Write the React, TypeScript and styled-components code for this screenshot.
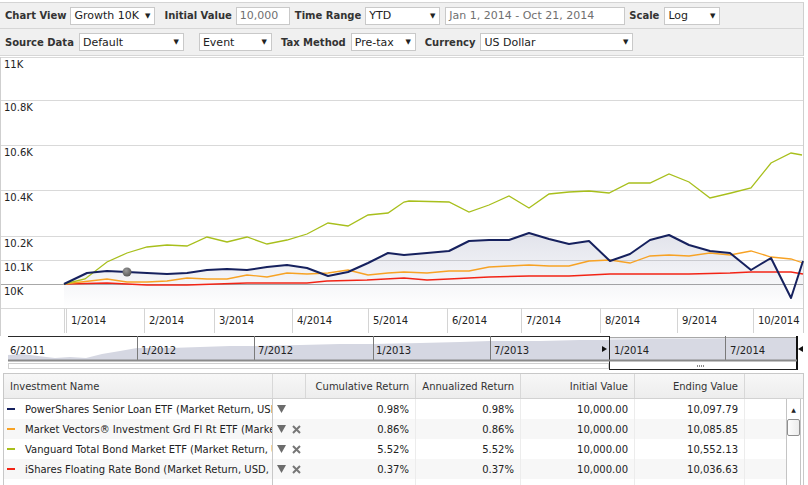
import React from 'react';
import styled, { createGlobalStyle } from 'styled-components';

const GlobalStyle = createGlobalStyle`
  html, body {
    margin: 0;
    padding: 0;
    background: #fff;
  }
  body {
    font-family: "DejaVu Sans", Verdana, sans-serif;
    font-size: 10px;
    color: #222;
  }
`;

const Page = styled.div`
  width: 808px;
  height: 485px;
  overflow: hidden;
  padding-top: 2px;
  box-sizing: border-box;
`;

/* ---------- toolbar ---------- */

const Toolbar = styled.div`
  width: 804px;
  border-top: 1px solid #d4d4d4;
  border-right: 1px solid #cfcfcf;
  box-sizing: border-box;
`;

const ToolbarRow = styled.div<{ $h: number; $gap: number }>`
  display: flex;
  align-items: center;
  gap: ${({ $gap }) => $gap}px;
  height: ${({ $h }) => $h}px;
  padding-left: 5px;
  background: #f0f0f0;
  border-bottom: 1px solid #d6d6d6;
`;

const Label = styled.span<{ $space?: number }>`
  font-weight: bold;
  font-size: 10px;
  color: #333;
  margin-left: ${({ $space }) => $space ?? 0}px;
  white-space: nowrap;
`;

const Field = styled.div<{ $w: number; $muted?: boolean; $space?: number }>`
  box-sizing: border-box;
  width: ${({ $w }) => $w}px;
  height: 18px;
  margin-left: ${({ $space }) => $space ?? 0}px;
  display: flex;
  align-items: center;
  padding: 0 4px 0 3px;
  background: #fff;
  border: 1px solid #c9c9c9;
  font-size: 11px;
  color: ${({ $muted }) => ($muted ? '#6f6f6f' : '#222')};
  white-space: nowrap;
  overflow: hidden;
`;

const Caret = styled.span`
  margin-left: auto;
  font-size: 7px;
  color: #222;
`;

const Select: React.FC<{ w: number; value: string; space?: number }> = ({ w, value, space }) => (
  <Field $w={w} $space={space}>
    {value}
    <Caret>▼</Caret>
  </Field>
);

/* ---------- chart ---------- */

const ChartPanel = styled.div`
  width: 808px;
  height: 277px;
`;

const NavigatorPanel = styled.div`
  width: 808px;
  height: 40px;
`;

const AxisText = styled.text`
  font-family: "DejaVu Sans", Verdana, sans-serif;
  font-size: 10px;
  fill: #222;
`;

const navy = [[64,284],[87,273],[107,271],[127,272],[147,273],[167,274],[187,273],[207,270],[227,269],[247,270],[267,267],[287,265],[307,268],[328,276],[348,272],[368,263],[388,253],[404,255],[427,253],[449,251],[469,241],[489,240],[509,240],[529,233],[549,239],[569,244],[589,241],[610,261],[630,254],[650,240],[669,235],[689,245],[710,251],[730,253],[751,270],[771,258],[791,298],[803,261]];
const green = [[64,284],[85,279],[107,262],[127,253],[147,247],[167,245],[187,246],[207,237],[227,242],[247,237],[267,244],[287,240],[307,234],[328,223],[348,226],[368,215],[388,213],[404,202],[409,201],[449,202],[469,212],[489,205],[509,196],[529,208],[549,194],[569,192],[589,191],[609,193],[629,183],[650,183],[669,174],[689,182],[710,198],[731,193],[751,188],[771,163],[791,153],[802,155]];
const orange = [[64,284],[107,279],[127,282],[147,282],[167,281],[187,278],[207,279],[227,279],[247,275],[267,277],[287,273],[307,274],[328,273],[348,270],[368,275],[388,273],[404,272],[427,273],[449,271],[469,271],[489,267],[509,266],[529,265],[549,266],[569,266],[589,261],[610,260],[630,263],[650,256],[669,255],[689,256],[710,253],[730,255],[751,251],[771,257],[791,259],[803,263]];
const red = [[64,284],[107,283],[147,285],[187,285],[247,283],[307,283],[327,281],[367,280],[404,278],[427,280],[449,279],[489,277],[529,276],[569,276],[610,274],[650,274],[689,274],[730,273],[751,272],[791,272],[803,274]];

const pts = (a: number[][]) => a.map((p) => p.join(',')).join(' ');

const gridLines = [
  { y: 57, label: '11K' },
  { y: 100, label: '10.8K' },
  { y: 145, label: '10.6K' },
  { y: 190, label: '10.4K' },
  { y: 236, label: '10.2K' },
  { y: 260, label: '10.1K' },
  { y: 284, label: '10K' },
];

const months = [
  { x: 66, label: '1/2014' },
  { x: 144, label: '2/2014' },
  { x: 214, label: '3/2014' },
  { x: 292, label: '4/2014' },
  { x: 368, label: '5/2014' },
  { x: 447, label: '6/2014' },
  { x: 521, label: '7/2014' },
  { x: 600, label: '8/2014' },
  { x: 677, label: '9/2014' },
  { x: 753, label: '10/2014' },
];

const GrowthChart: React.FC = () => (
  <ChartPanel>
    <svg width="808" height="277" viewBox="0 56 808 277">
      <defs>
        <linearGradient id="navyFill" x1="0" y1="0" x2="0" y2="1">
          <stop offset="0" stopColor="#1b2766" stopOpacity="0.13" />
          <stop offset="1" stopColor="#1b2766" stopOpacity="0" />
        </linearGradient>
        <radialGradient id="marker" cx="0.4" cy="0.35" r="0.7">
          <stop offset="0" stopColor="#9a9a9a" />
          <stop offset="1" stopColor="#555" />
        </radialGradient>
      </defs>
      {gridLines.map((g) => (
        <g key={g.label}>
          <line x1="0" x2="803" y1={g.y + 0.5} y2={g.y + 0.5} stroke={g.label === '10K' ? '#a8a8a8' : '#d9d9d9'} />
          <AxisText x="4" y={g.y + 11}>{g.label}</AxisText>
        </g>
      ))}
      <line x1="0" x2="803" y1="308.5" y2="308.5" stroke="#d9d9d9" />
      <line x1="0.5" x2="0.5" y1="57" y2="333" stroke="#cfcfcf" />
      <line x1="803.5" x2="803.5" y1="57" y2="333" stroke="#cfcfcf" />
      <line x1="64.5" x2="64.5" y1="308" y2="333" stroke="#d4d4d4" />
      {months.map((m) => (
        <g key={m.label}>
          <line x1={m.x + 0.5} x2={m.x + 0.5} y1="308" y2="333" stroke="#d4d4d4" />
          <AxisText x={m.x + 5} y="324">{m.label}</AxisText>
        </g>
      ))}
      <polygon points={`64,308 ${pts(navy)} 803,308`} fill="url(#navyFill)" />
      <polyline points={pts(red)} fill="none" stroke="#f22416" strokeWidth="1.4" />
      <polyline points={pts(orange)} fill="none" stroke="#f7a224" strokeWidth="1.3" />
      <polyline points={pts(green)} fill="none" stroke="#a8bf1c" strokeWidth="1.3" />
      <polyline points={pts(navy)} fill="none" stroke="#16215e" strokeWidth="2" strokeLinejoin="round" />
      <circle cx="127" cy="272" r="4.5" fill="url(#marker)" />
    </svg>
  </ChartPanel>
);

const navLabels = [
  { x: 10, label: '6/2011' },
  { x: 141, label: '1/2012' },
  { x: 258, label: '7/2012' },
  { x: 376, label: '1/2013' },
  { x: 494, label: '7/2013' },
  { x: 614, label: '1/2014' },
  { x: 730, label: '7/2014' },
];

const Navigator: React.FC = () => (
  <NavigatorPanel>
    <svg width="808" height="40" viewBox="0 333 808 40">
      <line x1="0.5" x2="0.5" y1="333" y2="336" stroke="#cfcfcf" />
      <path
        d="M8,360 L8,355 L22,354 L38,356 L55,358 L70,357 L86,358 L102,354 L120,351 L137,348 L170,348 L200,347 L230,346 L254,346 L300,345 L340,344 L373,344 L420,343 L460,342 L490,341 L540,341 L580,340 L609,340 L650,339 L700,339 L750,338 L797,338 L797,360 Z"
        fill="#d5d7e2"
      />
      <rect x="609" y="337" width="188" height="23" fill="#d9dae4" opacity="0.55" />
      <line x1="8" x2="609" y1="336.5" y2="336.5" stroke="#2a2a2a" />
      <line x1="609" x2="797" y1="337.5" y2="337.5" stroke="#a8a8a8" />
      {[137, 254, 373, 490, 725].map((x) => (
        <line key={x} x1={x + 0.5} x2={x + 0.5} y1="336" y2="360" stroke="#7a7a7a" />
      ))}
      <line x1="609.5" x2="609.5" y1="336" y2="370" stroke="#222" />
      <line x1="797" x2="797" y1="336" y2="370" stroke="#111" strokeWidth="2" />
      <line x1="8" x2="797" y1="360.5" y2="360.5" stroke="#8a8a8a" strokeWidth="2" />
      {navLabels.map((n) => (
        <AxisText key={n.label} x={n.x} y="354">{n.label}</AxisText>
      ))}
      <rect x="8.5" y="363.5" width="600" height="5" fill="#fff" stroke="#d0d0d0" />
      <line x1="609" x2="797" y1="369.5" y2="369.5" stroke="#222" />
      {[697, 699, 701, 703].map((x) => (
        <rect key={x} x={x} y="365" width="1" height="2" fill="#888" />
      ))}
      <polygon points="602,346 607,349 602,352" fill="#111" />
      <polygon points="803,346 798,349 803,352" fill="#111" />
    </svg>
  </NavigatorPanel>
);

/* ---------- table ---------- */

const Table = styled.div`
  box-sizing: border-box;
  width: 801px;
  margin-left: 3px;
  border: 1px solid #c8c8c8;
  border-bottom: none;
  height: 112px;
  overflow: hidden;
`;

const cols = '269px 33px 110px 105px 114px 110px 1fr';

const HeaderRow = styled.div`
  display: grid;
  grid-template-columns: ${cols};
  height: 24px;
  background: linear-gradient(#f7f7f7, #ededed);
  border-bottom: 1px solid #d2d2d2;
`;

const HeadCell = styled.div<{ $align?: 'left' | 'right' }>`
  display: flex;
  align-items: center;
  justify-content: ${({ $align }) => ($align === 'right' ? 'flex-end' : 'flex-start')};
  padding: 0 6px;
  color: #333;
  border-right: 1px solid #d8d8d8;
  white-space: nowrap;
  &:last-child {
    border-right: none;
  }
`;

const Body = styled.div`
  display: flex;
`;

const Rows = styled.div`
  width: 782px;
`;

const Row = styled.div<{ $alt?: boolean; $h?: number }>`
  display: grid;
  grid-template-columns: ${cols};
  height: ${({ $h }) => $h ?? 20}px;
  background: ${({ $alt }) => ($alt ? '#f7f7f7' : '#fff')};
`;

const Cell = styled.div<{ $sep?: 'strong' | 'faint' | 'none' }>`
  display: flex;
  align-items: center;
  justify-content: flex-end;
  padding: 0 6px;
  color: #222;
  white-space: nowrap;
  border-right: 1px solid
    ${({ $sep }) => ($sep === 'strong' ? '#c8c8c8' : $sep === 'faint' ? '#ececec' : 'transparent')};
`;

const NameCell = styled.div`
  display: flex;
  align-items: center;
  gap: 10px;
  padding-left: 3px;
  overflow: hidden;
  white-space: nowrap;
  color: #222;
  border-right: 1px solid #c8c8c8;
`;

const Swatch = styled.span<{ $color: string }>`
  flex: none;
  width: 8px;
  height: 2px;
  background: ${({ $color }) => $color};
`;

const IconCell = styled.div`
  display: flex;
  align-items: center;
  gap: 6px;
  padding-left: 4px;
`;

const ScrollTrack = styled.div`
  box-sizing: border-box;
  width: 15px;
  height: 90px;
  border-left: 1px solid #c4c4c4;
  border-right: 1px solid #c4c4c4;
  display: flex;
  flex-direction: column;
  align-items: center;
`;

const ScrollArrow = styled.div`
  height: 20px;
  display: flex;
  align-items: center;
  font-size: 6px;
  color: #222;
`;

const ScrollThumb = styled.div`
  box-sizing: border-box;
  width: 13px;
  height: 17px;
  border: 1px solid #8f8f8f;
  border-radius: 2px;
  background: linear-gradient(90deg, #fdfdfd, #ececec);
`;

const DownIcon = () => (
  <svg width="9" height="8" viewBox="0 0 9 8">
    <polygon points="0,0 9,0 4.5,8" fill="#6c6c6c" />
  </svg>
);

const CloseIcon = () => (
  <svg width="9" height="9" viewBox="0 0 9 9">
    <path d="M1,1 L8,8 M8,1 L1,8" stroke="#777" strokeWidth="2" />
  </svg>
);

interface Investment {
  name: string;
  color: string;
  removable: boolean;
  cumulative: string;
  annualized: string;
  initial: string;
  ending: string;
}

const investments: Investment[] = [
  { name: 'PowerShares Senior Loan ETF (Market Return, USD, Daily)', color: '#16215e', removable: false, cumulative: '0.98%', annualized: '0.98%', initial: '10,000.00', ending: '10,097.79' },
  { name: 'Market Vectors® Investment Grd Fl Rt ETF (Market Return, USD, Daily)', color: '#f7a224', removable: true, cumulative: '0.86%', annualized: '0.86%', initial: '10,000.00', ending: '10,085.85' },
  { name: 'Vanguard Total Bond Market ETF (Market Return, USD, Daily)', color: '#a8bf1c', removable: true, cumulative: '5.52%', annualized: '5.52%', initial: '10,000.00', ending: '10,552.13' },
  { name: 'iShares Floating Rate Bond (Market Return, USD, Daily)', color: '#f22416', removable: true, cumulative: '0.37%', annualized: '0.37%', initial: '10,000.00', ending: '10,036.63' },
];

const InvestmentTable: React.FC = () => (
  <Table>
    <HeaderRow>
      <HeadCell>Investment Name</HeadCell>
      <HeadCell />
      <HeadCell $align="right">Cumulative Return</HeadCell>
      <HeadCell $align="right">Annualized Return</HeadCell>
      <HeadCell $align="right">Initial Value</HeadCell>
      <HeadCell $align="right">Ending Value</HeadCell>
      <HeadCell />
    </HeaderRow>
    <Body>
      <Rows>
        {investments.map((inv, i) => (
          <Row key={inv.name} $alt={i % 2 === 1}>
            <NameCell title={inv.name}>
              <Swatch $color={inv.color} />
              {inv.name}
            </NameCell>
            <IconCell>
              <DownIcon />
              {inv.removable && <CloseIcon />}
            </IconCell>
            <Cell $sep="faint">{inv.cumulative}</Cell>
            <Cell $sep="faint">{inv.annualized}</Cell>
            <Cell $sep="faint">{inv.initial}</Cell>
            <Cell $sep="faint">{inv.ending}</Cell>
            <Cell $sep="none" />
          </Row>
        ))}
        <Row $h={12}>
          <NameCell />
          <IconCell />
          <Cell $sep="faint" />
          <Cell $sep="faint" />
          <Cell $sep="faint" />
          <Cell $sep="faint" />
          <Cell $sep="none" />
        </Row>
      </Rows>
      <ScrollTrack>
        <ScrollArrow>▲</ScrollArrow>
        <ScrollThumb />
      </ScrollTrack>
    </Body>
  </Table>
);

export default function App() {
  return (
    <Page>
      <GlobalStyle />
      <Toolbar>
        <ToolbarRow $h={25} $gap={4}>
          <Label>Chart View</Label>
          <Select w={85} value="Growth 10K" />
          <Label $space={5}>Initial Value</Label>
          <Field $w={54} $muted>10,000</Field>
          <Label $space={1}>Time Range</Label>
          <Select w={75} value="YTD" />
          <Field $w={180} $space={1} $muted>Jan 1, 2014 - Oct 21, 2014</Field>
          <Label>Scale</Label>
          <Select w={56} value="Log" space={1} />
        </ToolbarRow>
        <ToolbarRow $h={26} $gap={5}>
          <Label>Source Data</Label>
          <Select w={105} value="Default" />
          <Select w={73} value="Event" space={10} />
          <Label $space={4}>Tax Method</Label>
          <Select w={65} value="Pre-tax" />
          <Label $space={4}>Currency</Label>
          <Select w={153} value="US Dollar" />
        </ToolbarRow>
      </Toolbar>
      <GrowthChart />
      <Navigator />
      <InvestmentTable />
    </Page>
  );
}
